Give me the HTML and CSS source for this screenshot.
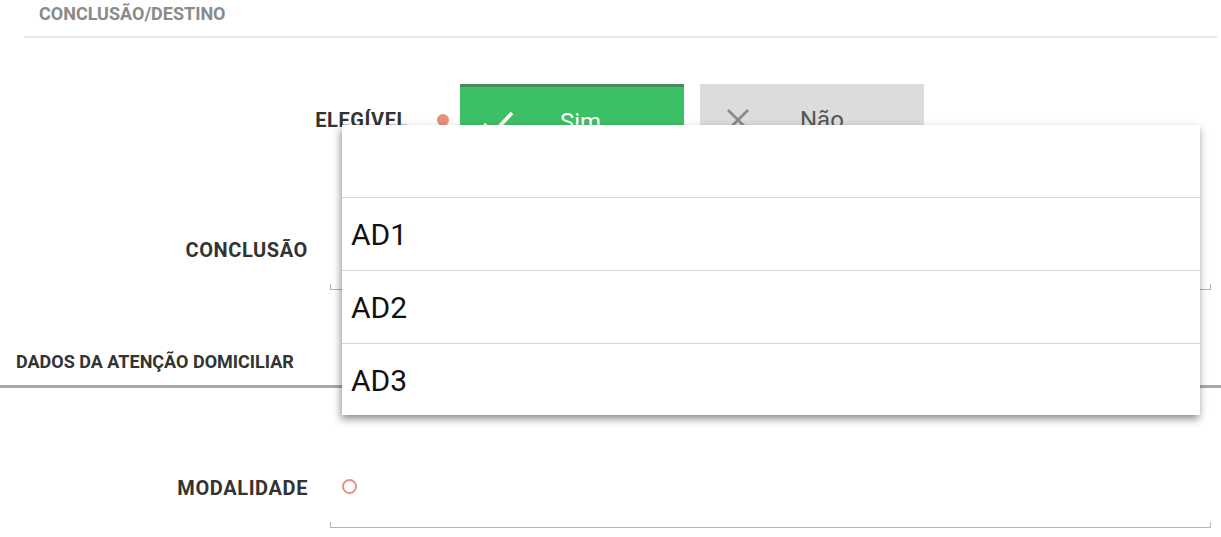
FILE: index.html
```html
<!DOCTYPE html>
<html lang="pt">
<head>
<meta charset="utf-8">
<title>Conclusão/Destino</title>
<link rel="stylesheet" href="styles.css">
</head>
<body>
<div class="page">
  <div class="section-title">CONCLUSÃO/DESTINO</div>

  <div class="row-eleg">
    <div class="label label-eleg">ELEGÍVEL</div>
    <span class="dot"></span>
    <div class="btn btn-yes">
      <svg class="ico" width="36" height="36" viewBox="0 0 36 36"><path d="M4 20 L13 29 L32 9" fill="none" stroke="#fff" stroke-width="3.5"/></svg>
      <span class="btn-text">Sim</span>
    </div>
    <div class="btn btn-no">
      <svg class="ico" width="36" height="36" viewBox="0 0 36 36"><path d="M8 8 L28 28 M28 8 L8 28" fill="none" stroke="#8a8a8a" stroke-width="2.8"/></svg>
      <span class="btn-text">Não</span>
    </div>
  </div>

  <div class="row row-concl">
    <div class="label">CONCLUSÃO</div>
    <div class="field"></div>
  </div>

  <div class="section-title2">DADOS DA ATENÇÃO DOMICILIAR</div>

  <div class="row row-modal">
    <div class="label">MODALIDADE</div>
    <div class="field field-modal"><span class="ring"></span></div>
  </div>

  <ul class="dropdown">
    <li class="opt"></li>
    <li class="opt">AD1</li>
    <li class="opt">AD2</li>
    <li class="opt">AD3</li>
  </ul>
</div>
</body>
</html>
```

FILE: styles.css
```css
* { box-sizing: border-box; }
html, body { margin: 0; padding: 0; background: #fff; }
body {
  font-family: Roboto, "Noto Sans", "Liberation Sans", sans-serif;
  width: 1221px;
  height: 537px;
  overflow: hidden;
}
.page { position: relative; width: 1221px; height: 537px; }

.section-title {
  margin: 0 4px 0 24px;
  padding-left: 15px;
  height: 38px;
  line-height: 28px;
  font-size: 18px;
  font-weight: 700;
  color: #8a8a8a;
  border-bottom: 2px solid #e8e8e8;
}

.row-eleg {
  display: flex;
  align-items: center;
  margin-top: 46px;
  height: 72px;
}
.label {
  font-size: 20px;
  font-weight: 700;
  color: #333;
  letter-spacing: 0.6px;
  text-align: right;
}
.label-eleg { width: 408px; }
.dot {
  width: 12px; height: 12px; border-radius: 50%;
  background: #e8917a;
  margin-left: 29px; margin-right: 11px;
}
.btn {
  width: 224px; height: 72px;
  display: flex; align-items: center;
  padding-left: 20px;
  font-size: 24px;
}
.btn-yes { background: #3cc065; border-top: 3px solid #4b8a5c; color: #fff; }
.btn-no { background: #dcdcdc; color: #555; margin-left: 16px; }
.ico { flex: none; }
.btn-text { margin-left: 44px; }

.row {
  display: grid;
  grid-template-columns: 330px 881px;
  align-items: center;
  height: 80px;
}
.row .label { padding-right: 22px; }
.row-concl { margin-top: 54px; }
.field {
  height: 80px;
  border-bottom: 1px solid #b3b3b3;
  position: relative;
}
.field::before, .field::after {
  content: "";
  position: absolute;
  bottom: 0;
  width: 1px; height: 5px;
  background: #b3b3b3;
}
.field::before { left: 0; }
.field::after { right: 0; }

.section-title2 {
  margin-top: 58px;
  padding-left: 16px;
  line-height: 28px;
  height: 40px;
  font-size: 18px;
  font-weight: 700;
  color: #333;
  border-bottom: 3px solid #a9a9a9;
}
.row-modal { margin-top: 60px; }
.field-modal { padding: 31px 0 0 12px; }
.ring {
  display: block;
  width: 15px; height: 15px; border-radius: 50%;
  border: 2.5px solid #e8917a;
}

.dropdown {
  position: absolute;
  left: 342px; top: 125px;
  width: 858px;
  margin: 0; padding: 0;
  list-style: none;
  background: #fff;
  box-shadow: -1px 4px 8px rgba(0,0,0,0.45);
}
.opt {
  height: 73px;
  line-height: 74px;
  padding-left: 9px;
  font-size: 30px;
  color: #111;
  border-bottom: 1px solid #d6d6d6;
}
.opt:last-child { border-bottom: none; height: 71px; }
```
